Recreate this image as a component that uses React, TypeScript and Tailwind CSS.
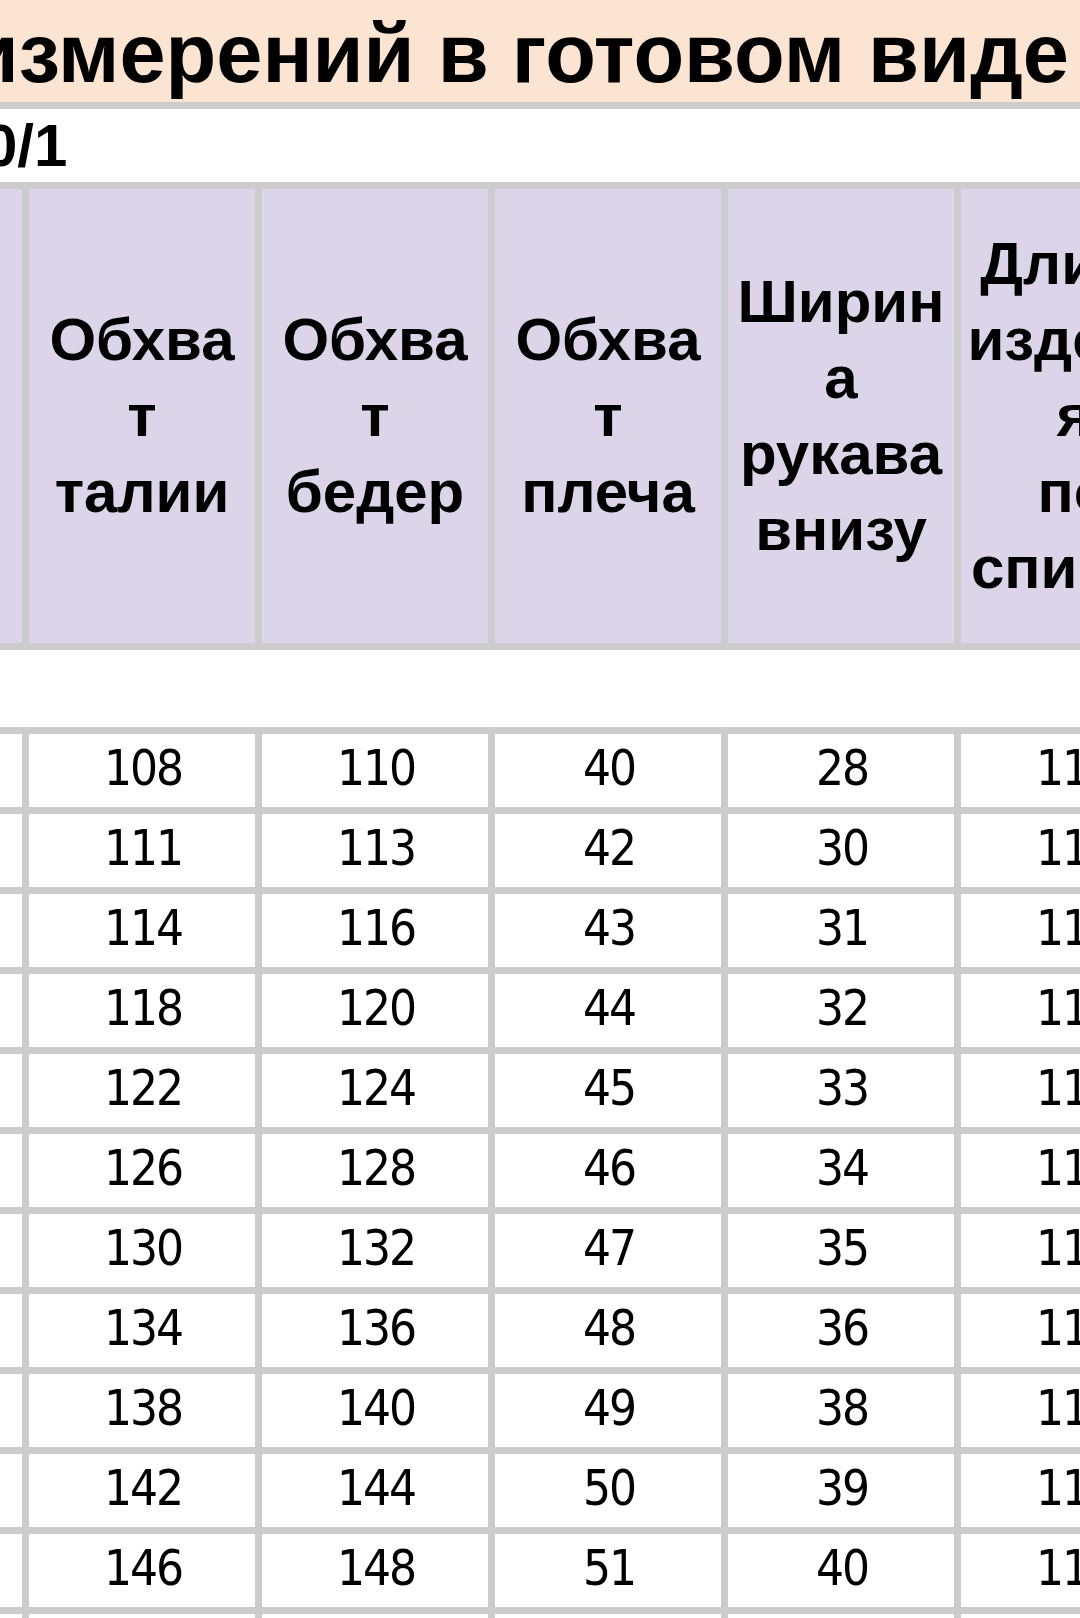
import React from "react";

const headers: string[][] = [
  ["Обхва", "т", "талии"],
  ["Обхва", "т", "бедер"],
  ["Обхва", "т", "плеча"],
  ["Ширин", "а", "рукава", "внизу"],
  ["Длина", "издели", "я", "по", "спинке"],
];

const rows: string[][] = [
  ["108", "110", "40", "28", "110"],
  ["111", "113", "42", "30", "110"],
  ["114", "116", "43", "31", "111"],
  ["118", "120", "44", "32", "111"],
  ["122", "124", "45", "33", "112"],
  ["126", "128", "46", "34", "112"],
  ["130", "132", "47", "35", "113"],
  ["134", "136", "48", "36", "113"],
  ["138", "140", "49", "38", "114"],
  ["142", "144", "50", "39", "114"],
  ["146", "148", "51", "40", "115"],
];

export default function App() {
  return (
    <div
      className="w-[1080px] h-[1618px] overflow-hidden bg-[#cccccc] flex flex-col gap-[7px] text-black"
      style={{ fontFamily: '"Liberation Sans", Arial, sans-serif' }}
    >
      {/* title band */}
      <div className="h-[102px] shrink-0 bg-[#fce4d2] flex justify-end overflow-hidden pr-[11px]">
        <span className="whitespace-nowrap font-bold text-[83px] leading-[96px] pt-[6px]">
          Таблица измерений в готовом виде
        </span>
      </div>

      {/* model row */}
      <div className="h-[73px] shrink-0 bg-white flex items-center">
        <span className="whitespace-nowrap font-bold text-[60px] leading-[73px] -ml-[16px]">0/1</span>
      </div>

      {/* header row */}
      <div className="h-[454px] shrink-0 flex gap-[7px]">
        <div className="w-[22px] shrink-0 bg-[#dcd4e8]" />
        {headers.map((lines, i) => (
          <div
            key={i}
            className="w-[226px] shrink-0 bg-[#dcd4e8] flex items-center justify-center text-center font-bold text-[60px] leading-[76px]"
          >
            <div>
              {lines.map((l, j) => (
                <div key={j} className="whitespace-nowrap">
                  {l}
                </div>
              ))}
            </div>
          </div>
        ))}
      </div>

      {/* empty merged row */}
      <div className="h-[77px] shrink-0 bg-white" />

      {/* data rows */}
      {rows.map((r, i) => (
        <div key={i} className="h-[73px] shrink-0 flex gap-[7px]">
          <div className="w-[22px] shrink-0 bg-white" />
          {r.map((v, j) => (
            <div
              key={j}
              className="w-[226px] shrink-0 bg-white flex items-center justify-center pb-[4px] pl-[2px] text-[49px] leading-[60px] tracking-[-2px]"
              style={{ fontFamily: '"DejaVu Sans Condensed", "Liberation Sans", sans-serif' }}
            >
              {v}
            </div>
          ))}
        </div>
      ))}

      {/* next row, cut off */}
      <div className="h-[73px] shrink-0 flex gap-[7px]">
        <div className="w-[22px] shrink-0 bg-white" />
        {[0, 1, 2, 3, 4].map((j) => (
          <div key={j} className="w-[226px] shrink-0 bg-white" />
        ))}
      </div>
    </div>
  );
}
